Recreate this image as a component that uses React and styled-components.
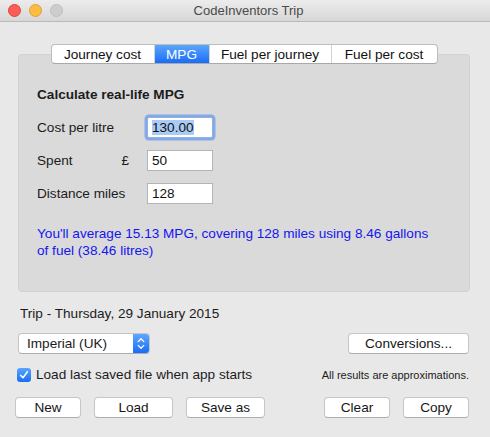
import React from 'react';
import styled, { createGlobalStyle } from 'styled-components';

const GlobalStyle = createGlobalStyle`
  html, body {
    margin: 0;
    padding: 0;
    background: #e8e8e8;
  }
  body {
    font-family: "Liberation Sans", Arial, sans-serif;
    font-size: 13.6px;
    color: #1c1c1c;
  }
`;

const Window = styled.div`
  width: 490px;
  height: 437px;
  background: #e8e8e8;
  display: flex;
  flex-direction: column;
  overflow: hidden;
`;

const TitleBar = styled.div`
  height: 21px;
  border-bottom: 1px solid #b9b9b9;
  background: linear-gradient(#ececec, #d7d7d7);
  display: flex;
  align-items: center;
  position: relative;
  padding-left: 8px;
  gap: 8px;
`;

const Light = styled.span`
  width: 11px;
  height: 11px;
  border-radius: 50%;
  background: ${p => p.color};
  border: 0.5px solid ${p => p.edge};
`;

const Title = styled.div`
  flex: 1;
  text-align: center;
  margin-right: 64px;
  color: #4a4a4a;
  font-size: 13px;
`;

const Body = styled.div`
  padding: 22px 20px 0 18px;
  display: flex;
  flex-direction: column;
`;

const Segmented = styled.div`
  align-self: center;
  display: flex;
  height: 18px;
  margin-bottom: -10px;
  position: relative;
  z-index: 1;
  background: #fff;
  border: 1px solid #bdbdbd;
  border-bottom-color: #a9a9a9;
  border-radius: 4px;
  overflow: hidden;
`;

const Segment = styled.div`
  width: ${p => p.w}px;
  display: flex;
  align-items: center;
  justify-content: center;
  color: ${p => (p.active ? '#fff' : '#111')};
  background: ${p => (p.active ? 'linear-gradient(#5aa6fd, #1a6cf6)' : 'transparent')};
  border-left: ${p => (p.first ? 'none' : '1px solid #d3d3d3')};
`;

const Panel = styled.div`
  height: 238px;
  box-sizing: border-box;
  background: #dadada;
  border: 1px solid #d1d1d1;
  border-radius: 4px;
  padding: 32px 18px 0 18px;
  display: flex;
  flex-direction: column;
`;

const Heading = styled.div`
  font-weight: bold;
  line-height: 16px;
  margin-bottom: 13px;
`;

const Rows = styled.div`
  display: flex;
  flex-direction: column;
  gap: 11px;
`;

const Row = styled.div`
  display: flex;
  align-items: center;
  height: 22px;
`;

const Label = styled.div`
  width: 110px;
  display: flex;
  justify-content: space-between;
  padding-right: 18px;
  box-sizing: border-box;
`;

const Field = styled.div`
  width: 66px;
  height: 21px;
  box-sizing: border-box;
  background: #fff;
  border: 1px solid ${p => (p.focused ? '#8fb2e6' : '#b4b4b4')};
  box-shadow: ${p => (p.focused ? '0 0 0 2.5px #84a9e6' : 'none')};
  border-radius: ${p => (p.focused ? '2px' : '0')};
  padding: 0 4px;
  display: flex;
  align-items: center;
  color: #111;
`;

const Selected = styled.span`
  background: #a9cbf6;
`;

const Result = styled.div`
  margin-top: 21px;
  width: 400px;
  color: #1515f0;
  line-height: 17px;
`;

const TripLabel = styled.div`
  margin-top: 14px;
  margin-left: 2px;
  line-height: 16px;
`;

const SpreadRow = styled.div`
  display: flex;
  align-items: center;
  justify-content: space-between;
  margin-top: ${p => p.top}px;
  margin-right: 1px;
  margin-left: ${p => p.left || 0}px;
`;

const Popup = styled.div`
  width: 132px;
  height: 21px;
  box-sizing: border-box;
  display: flex;
  background: #fff;
  border: 1px solid #c4c4c4;
  border-bottom-color: #acacac;
  border-radius: 4px;
  overflow: hidden;
`;

const PopupText = styled.div`
  flex: 1;
  display: flex;
  align-items: center;
  padding-left: 8px;
`;

const Stepper = styled.div`
  width: 16px;
  background: linear-gradient(#5ea7fd, #1a6cf6);
  display: flex;
  align-items: center;
  justify-content: center;
`;

const Button = styled.div`
  width: ${p => p.w}px;
  height: 21px;
  box-sizing: border-box;
  background: #fff;
  border: 1px solid #c6c6c6;
  border-bottom-color: #adadad;
  border-radius: 4px;
  display: flex;
  align-items: center;
  justify-content: center;
  color: #161616;
`;

const CheckLabel = styled.label`
  display: flex;
  align-items: center;
  gap: 5px;
  margin-left: -1px;
  line-height: 16px;
`;

const CheckBox = styled.span`
  width: 14px;
  height: 14px;
  border-radius: 3px;
  background: linear-gradient(#5aa6fd, #1a6cf6);
  display: flex;
  align-items: center;
  justify-content: center;
`;

const Note = styled.div`
  font-size: 11px;
  color: #1c1c1c;
`;

const ButtonGroup = styled.div`
  display: flex;
  gap: 13px;
`;

const tabs = [
  { label: 'Journey cost', w: 102 },
  { label: 'MPG', w: 54, active: true },
  { label: 'Fuel per journey', w: 121 },
  { label: 'Fuel per cost', w: 105 },
];

const App = () => {
  return (
    <Window>
      <GlobalStyle />
      <TitleBar>
        <Light color="#fc5c56" edge="#e0443e" />
        <Light color="#fdbc40" edge="#dea236" />
        <Light color="#cdcdcd" edge="#bdbdbd" />
        <Title>CodeInventors Trip</Title>
      </TitleBar>
      <Body>
        <Segmented>
          {tabs.map((t, i) => (
            <Segment key={t.label} w={t.w} active={t.active} first={i === 0}>
              {t.label}
            </Segment>
          ))}
        </Segmented>
        <Panel>
          <Heading>Calculate real-life MPG</Heading>
          <Rows>
            <Row>
              <Label>Cost per litre</Label>
              <Field focused>
                <Selected>130.00</Selected>
              </Field>
            </Row>
            <Row>
              <Label>
                <span>Spent</span>
                <span>£</span>
              </Label>
              <Field>50</Field>
            </Row>
            <Row>
              <Label>Distance miles</Label>
              <Field>128</Field>
            </Row>
          </Rows>
          <Result>
            You'll average 15.13 MPG, covering 128 miles using 8.46 gallons of fuel (38.46 litres)
          </Result>
        </Panel>
        <TripLabel>Trip - Thursday, 29 January 2015</TripLabel>
        <SpreadRow top={11}>
          <Popup>
            <PopupText>Imperial (UK)</PopupText>
            <Stepper>
              <svg width="8" height="13" viewBox="0 0 8 13">
                <path d="M1.2 4.6 L4 1.8 L6.8 4.6 M1.2 8.4 L4 11.2 L6.8 8.4" stroke="#fff" strokeWidth="1.3" fill="none" strokeLinecap="round" strokeLinejoin="round" />
              </svg>
            </Stepper>
          </Popup>
          <Button w={121}>Conversions...</Button>
        </SpreadRow>
        <SpreadRow top={13}>
          <CheckLabel>
            <CheckBox>
              <svg width="10" height="10" viewBox="0 0 10 10">
                <path d="M1.8 5.4 L4 7.8 L8.4 1.8" stroke="#fff" strokeWidth="1.5" fill="none" strokeLinecap="round" strokeLinejoin="round" />
              </svg>
            </CheckBox>
            Load last saved file when app starts
          </CheckLabel>
          <Note>All results are approximations.</Note>
        </SpreadRow>
        <SpreadRow top={14} left={-3}>
          <ButtonGroup>
            <Button w={66}>New</Button>
            <Button w={79}>Load</Button>
            <Button w={79}>Save as</Button>
          </ButtonGroup>
          <ButtonGroup>
            <Button w={66}>Clear</Button>
            <Button w={66}>Copy</Button>
          </ButtonGroup>
        </SpreadRow>
      </Body>
    </Window>
  );
};

export default App;
